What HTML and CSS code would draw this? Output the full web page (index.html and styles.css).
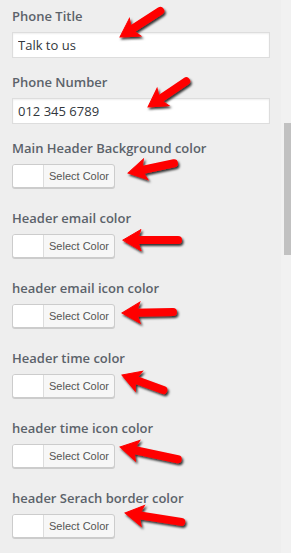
FILE: index.html
```html
<!DOCTYPE html>
<html>

<head>
  <meta charset="UTF-8">
  <link rel="stylesheet" href="styles.css">
</head>

<body>
  <div class="page">
    <div class="panel">
      <div class="field text-field">
        <label class="field-label">Phone Title</label>
        <input class="text-input" type="text" value="Talk to us">
      </div>
      <div class="field text-field">
        <label class="field-label">Phone Number</label>
        <input class="text-input" type="text" value="012 345 6789">
      </div>
      <div class="field color-field">
        <label class="field-label">Main Header Background color</label>
        <button class="color-btn"><span class="swatch"></span><span class="btn-text">Select Color</span></button>
      </div>
      <div class="field color-field">
        <label class="field-label">Header email color</label>
        <button class="color-btn"><span class="swatch"></span><span class="btn-text">Select Color</span></button>
      </div>
      <div class="field color-field">
        <label class="field-label">header email icon color</label>
        <button class="color-btn"><span class="swatch"></span><span class="btn-text">Select Color</span></button>
      </div>
      <div class="field color-field">
        <label class="field-label">Header time color</label>
        <button class="color-btn"><span class="swatch"></span><span class="btn-text">Select Color</span></button>
      </div>
      <div class="field color-field">
        <label class="field-label">header time icon color</label>
        <button class="color-btn"><span class="swatch"></span><span class="btn-text">Select Color</span></button>
      </div>
      <div class="field color-field">
        <label class="field-label">header Serach border color</label>
        <button class="color-btn"><span class="swatch"></span><span class="btn-text">Select Color</span></button>
      </div>
    </div>
    <div class="scroll-track">
      <div class="scroll-thumb"></div>
    </div>
  </div>

  <!-- annotation arrows -->
  <svg class="arrows" width="291" height="553" viewBox="0 0 291 553">
    <defs>
      <filter id="shadow" x="-30%" y="-30%" width="160%" height="160%">
        <feDropShadow dx="1.5" dy="2" stdDeviation="1.3" flood-color="#000" flood-opacity="0.8" />
      </filter>
      <g id="arrow">
        <polygon points="0,0 18,-10.5 14,0 18,10.5" fill="#f00" />
      </g>
    </defs>
    <g filter="url(#shadow)" fill="#f00" stroke="#f00" stroke-linecap="round">
      <g transform="translate(120 37) rotate(-33)">
        <line x1="12" y1="0" x2="48" y2="0" stroke-width="8" /><use href="#arrow" />
      </g>
      <g transform="translate(148 107) rotate(-34)">
        <line x1="12" y1="0" x2="46" y2="0" stroke-width="8" /><use href="#arrow" />
      </g>
      <g transform="translate(128 173) rotate(-12)">
        <line x1="12" y1="0" x2="47" y2="0" stroke-width="8" /><use href="#arrow" />
      </g>
      <g transform="translate(123 240) rotate(0)">
        <line x1="12" y1="0" x2="55" y2="0" stroke-width="8" /><use href="#arrow" />
      </g>
      <g transform="translate(122 313) rotate(-1)">
        <line x1="12" y1="0" x2="51" y2="0" stroke-width="8" /><use href="#arrow" />
      </g>
      <g transform="translate(122 375) rotate(20)">
        <line x1="12" y1="0" x2="44" y2="0" stroke-width="8" /><use href="#arrow" />
      </g>
      <g transform="translate(120 447) rotate(12)">
        <line x1="12" y1="0" x2="59" y2="0" stroke-width="8" /><use href="#arrow" />
      </g>
      <g transform="translate(125 513) rotate(9)">
        <line x1="12" y1="0" x2="57" y2="0" stroke-width="8" /><use href="#arrow" />
      </g>
    </g>
  </svg>
</body>

</html>
```

FILE: styles.css
```css
html,
body {
  margin: 0;
  padding: 0;
}

body {
  width: 291px;
  height: 553px;
  overflow: hidden;
  position: relative;
  background: #eee;
  font-family: 'Open Sans', 'Noto Sans', sans-serif;
}

.page {
  display: flex;
  height: 100%;
}

.panel {
  flex: 1;
  padding: 6px 11px 0 12px;
  display: flex;
  flex-direction: column;
}

.field {
  flex-shrink: 0;
  display: flex;
  flex-direction: column;
  align-items: flex-start;
}

.text-field {
  height: 66px;
}

.color-field {
  height: 70px;
}

.field-label {
  font-size: 13px;
  font-weight: 600;
  color: #5b626a;
  line-height: 20px;
  margin-bottom: 6px;
  white-space: nowrap;
}

.text-input {
  width: 100%;
  height: 26px;
  box-sizing: border-box;
  margin: 0;
  padding: 0 5px;
  border: 1px solid #ddd;
  background: #fff;
  box-shadow: inset 0 1px 2px rgba(0, 0, 0, 0.07);
  font-family: inherit;
  font-size: 13px;
  color: #32373c;
  outline: none;
}

.color-btn {
  display: flex;
  align-items: stretch;
  height: 24px;
  margin: 0;
  padding: 0;
  border: 1px solid #ccc;
  border-radius: 3px;
  background: #f7f7f7;
  box-shadow: 0 1px 0 #ccc;
  overflow: hidden;
  cursor: pointer;
}

.swatch {
  width: 30px;
  background: #fff;
  border-right: 1px solid #ddd;
}

.btn-text {
  display: flex;
  align-items: center;
  padding: 0 5px;
  font-family: inherit;
  font-size: 11px;
  color: #555;
}

.scroll-track {
  width: 10px;
  background: #f1f1f1;
  display: flex;
  justify-content: flex-end;
}

.scroll-thumb {
  width: 7px;
  height: 132px;
  margin-top: 123px;
  background: #c1c1c1;
}

.arrows {
  position: absolute;
  top: 0;
  left: 0;
  pointer-events: none;
}
```
